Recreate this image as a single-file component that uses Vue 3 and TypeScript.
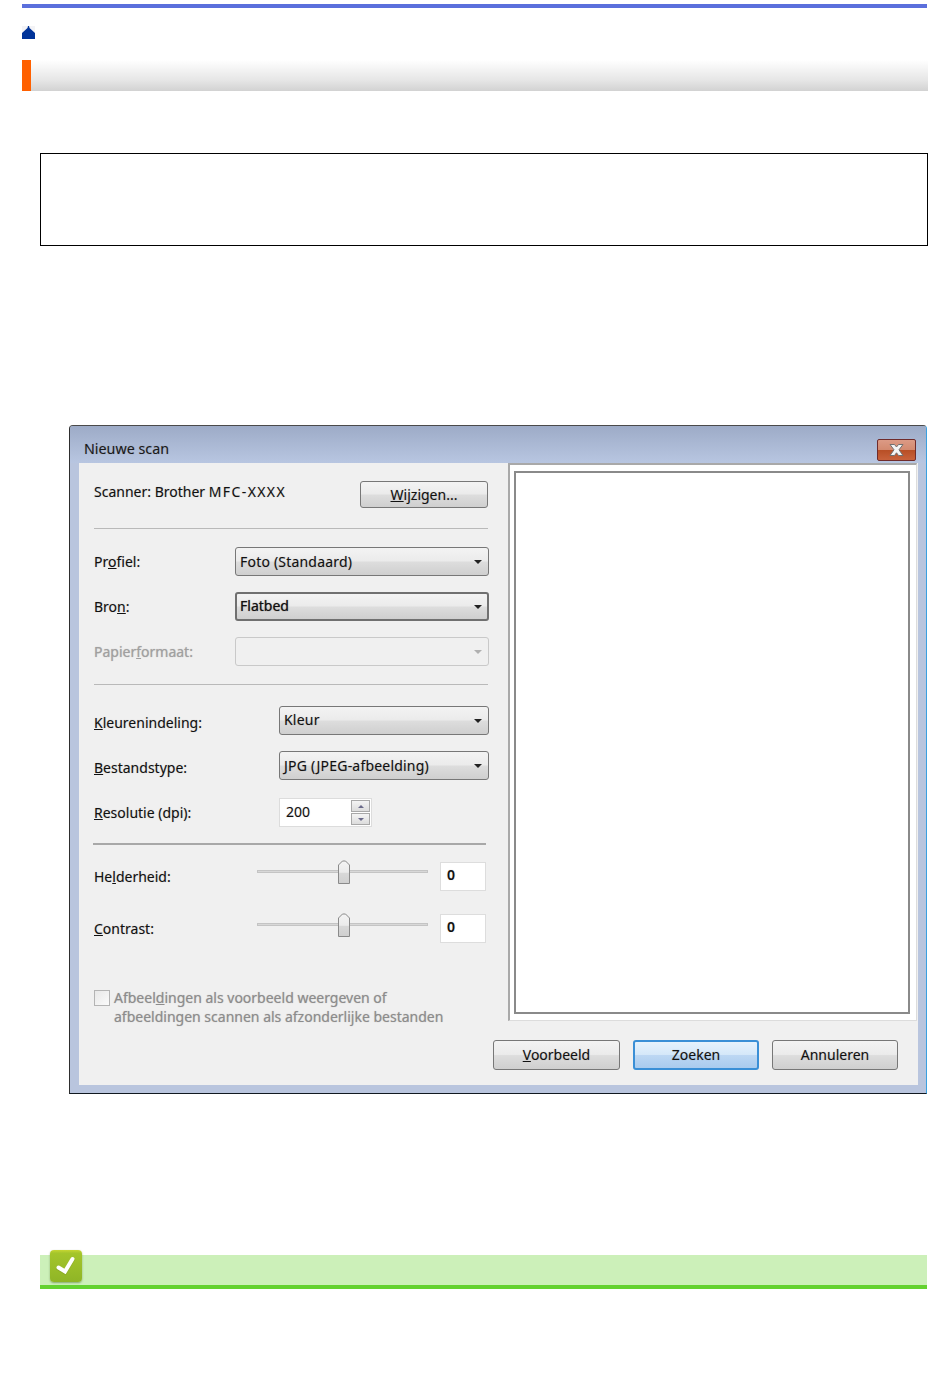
<script setup lang="ts">
interface Field {
  before: string
  key: string
  after: string
  value: string
  disabled?: boolean
  strong?: boolean
}

const profileFields: Field[] = [
  { before: 'Pr', key: 'o', after: 'fiel:', value: 'Foto (Standaard)' },
  { before: 'Bro', key: 'n', after: ':', value: 'Flatbed', strong: true },
  { before: 'Papier', key: 'f', after: 'ormaat:', value: '', disabled: true },
]

const formatFields: Field[] = [
  { before: '', key: 'K', after: 'leurenindeling:', value: 'Kleur' },
  { before: '', key: 'B', after: 'estandstype:', value: 'JPG (JPEG-afbeelding)' },
]

const sliders = [
  { before: 'He', key: 'l', after: 'derheid:', value: '0' },
  { before: '', key: 'C', after: 'ontrast:', value: '0' },
]
</script>

<template>
  <div class="page">
    <div class="topbar"></div>
    <svg class="home" width="13" height="13" viewBox="0 0 13 13" aria-hidden="true">
      <rect width="13" height="13" fill="#f3f3f6" />
      <path d="M0 13V7L5.500 2 6 0h1l.5 2L13 7v6z" fill="#003399" />
    </svg>
    <div class="heading"><span class="heading-mark"></span></div>
    <div class="outline-box"></div>

    <section class="dialog">
      <header class="titlebar">
        <span class="title">Nieuwe scan</span>
        <span class="close">
          <svg width="15" height="12" viewBox="0 0 15 12" aria-hidden="true">
            <path d="M1 .5h4.500l2 2.500 2-2.500H14L10 5.800l4 5.700H9.500l-2-2.700-2 2.700H1l4-5.700z" fill="#f4f4f4" stroke="#707070" stroke-width="1" />
          </svg>
        </span>
      </header>

      <div class="content">
        <div class="panes">
          <div class="form">
            <div class="scanner-row">
              <span>Scanner: Brother <span class="model">MFC-XXXX</span></span>
              <button class="btn change-btn" type="button"><u>W</u>ijzigen...</button>
            </div>
            <div class="rule rule-a"></div>

            <div class="group group-profile">
              <div v-for="f in profileFields" :key="f.key" class="row row-profile" :class="{ 'is-disabled': f.disabled }">
                <span class="label">{{ f.before }}<u>{{ f.key }}</u>{{ f.after }}</span>
                <div class="select" :class="{ 'select-strong': f.strong, 'select-disabled': f.disabled }">
                  <span>{{ f.value }}</span>
                  <i class="caret"></i>
                </div>
              </div>
            </div>
            <div class="rule rule-b"></div>

            <div class="group group-format">
              <div v-for="f in formatFields" :key="f.key" class="row row-format">
                <span class="label">{{ f.before }}<u>{{ f.key }}</u>{{ f.after }}</span>
                <div class="select">
                  <span>{{ f.value }}</span>
                  <i class="caret"></i>
                </div>
              </div>
              <div class="row row-format row-res">
                <span class="label"><u>R</u>esolutie (dpi):</span>
                <div class="spin">
                  <span class="spin-value">200</span>
                  <span class="spin-buttons">
                    <i class="spin-btn"><b class="tri tri-up"></b></i>
                    <i class="spin-btn"><b class="tri tri-down"></b></i>
                  </span>
                </div>
              </div>
            </div>
            <div class="rule rule-c"></div>

            <div class="group-sliders">
              <div v-for="s in sliders" :key="s.key" class="row row-slider">
                <span class="label">{{ s.before }}<u>{{ s.key }}</u>{{ s.after }}</span>
                <div class="track">
                  <svg class="thumb" width="14" height="25" viewBox="0 0 14 25" aria-hidden="true">
                    <defs>
                      <linearGradient id="thumbFill" x1="0" y1="0" x2="0" y2="1">
                        <stop offset="0" stop-color="#f4f4f4" />
                        <stop offset="0.5" stop-color="#ebebeb" />
                        <stop offset="0.55" stop-color="#d8d8d8" />
                        <stop offset="1" stop-color="#cfcfcf" />
                      </linearGradient>
                    </defs>
                    <path d="M1.500 23.500V5L5.500 1h3l4 4v18.500z" fill="url(#thumbFill)" stroke="#8a8a8a" stroke-width="1" stroke-linejoin="round" />
                  </svg>
                </div>
                <div class="num">{{ s.value }}</div>
              </div>
            </div>

            <div class="check-row">
              <span class="checkbox"></span>
              <span class="check-label">Afbeel<u>d</u>ingen als voorbeeld weergeven of<br />afbeeldingen scannen als afzonderlijke bestanden</span>
            </div>
          </div>

          <div class="preview">
            <div class="preview-frame"></div>
          </div>
        </div>

        <footer class="actions">
          <button class="btn action" type="button"><u>V</u>oorbeeld</button>
          <button class="btn action btn-primary" type="button">Zoeken</button>
          <button class="btn action" type="button">Annuleren</button>
        </footer>
      </div>
    </section>

    <div class="note">
      <span class="note-icon">
        <svg width="22" height="20" viewBox="0 0 22 20" aria-hidden="true">
          <path d="M3.500 11.500l6.500 4L17.500 3" fill="none" stroke="#7f9a24" stroke-width="4" stroke-linecap="square" stroke-linejoin="miter" opacity="0.5" transform="translate(0 1)" />
          <path d="M3.500 11.500l6.500 4L17.500 3" fill="none" stroke="#ffffff" stroke-width="4" stroke-linecap="round" stroke-linejoin="miter" />
        </svg>
      </span>
    </div>
  </div>
</template>

<style>
html,
body {
  margin: 0;
  background: #ffffff;
}
</style>

<style scoped>
.page {
  box-sizing: border-box;
  width: 950px;
  height: 1387px;
  padding: 4px 22px 0;
  overflow: hidden;
  font-family: "Noto Sans", "Liberation Sans", sans-serif;
  font-size: 14px;
  color: #111111;
  text-shadow: 0 0 1px rgba(60, 40, 40, 0.3);
}

.topbar {
  width: 905px;
  height: 4px;
  background: #5b6fdc;
}

.home {
  display: block;
  margin-top: 18px;
}

.heading {
  width: 906px;
  height: 31px;
  margin-top: 21px;
  background: linear-gradient(#ffffff 0%, #e6e6e6 65%, #d2d2d2 100%);
}

.heading-mark {
  display: block;
  width: 9px;
  height: 31px;
  background: #ff6000;
}

.outline-box {
  box-sizing: border-box;
  width: 888px;
  height: 93px;
  margin: 62px 0 0 18px;
  border: 1px solid #000000;
}

.dialog {
  box-sizing: border-box;
  display: flex;
  flex-direction: column;
  width: 858px;
  height: 669px;
  margin: 179px 0 0 47px;
  padding: 0 8px 8px 9px;
  background: #b9c5de;
  border-style: solid;
  border-width: 1px 1px 1px 1px;
  border-color: #4a4a4a #3aa0e0 #101820 #2e2e2e;
  border-radius: 4px 4px 0 0;
}

.titlebar {
  display: flex;
  flex: none;
  align-items: center;
  justify-content: space-between;
  height: 37px;
  margin: 0 -8px 0 -9px;
  padding: 0 10px 0 14px;
  background: linear-gradient(#9dabc7, #b8c6e1);
  border-radius: 3px 3px 0 0;
  font-size: 14.300px;
}

.title {
  padding-top: 8px;
  color: #1a1a1a;
}

.close {
  box-sizing: border-box;
  display: flex;
  align-items: center;
  justify-content: center;
  width: 39px;
  height: 22px;
  margin-top: 10px;
  background: linear-gradient(#dc9a85 0%, #d38a70 48%, #b84f26 52%, #c8623c 100%);
  border: 1px solid #6f2b2b;
  border-radius: 2px;
}

.content {
  display: flex;
  flex: 1;
  flex-direction: column;
  background: #f0f0f0;
}

.panes {
  display: grid;
  grid-template-columns: 429px 409px;
  grid-template-rows: 558px;
}

.form {
  box-sizing: border-box;
  min-height: 0;
  padding: 18px 20px 0 15px;
}

.scanner-row {
  display: flex;
  align-items: flex-start;
  justify-content: space-between;
  height: 27px;
  line-height: 22px;
}

.model {
  letter-spacing: 1.400px;
}

.rule {
  height: 1px;
  background: #b9b9b9;
}

.rule-a {
  margin-top: 20px;
}

.group {
  display: flex;
  flex-direction: column;
  gap: 16px;
}

.group-profile {
  margin-top: 18px;
}

.rule-b {
  margin-top: 18px;
}

.group-format {
  margin-top: 21px;
}

.row {
  display: grid;
  align-items: center;
  height: 29px;
}

.row-profile {
  grid-template-columns: 141px 254px;
}

.row-format {
  grid-template-columns: 185px 210px;
}

.row-format .label {
  margin-top: 4px;
}

.row-format:first-child .select span {
  margin-bottom: 2px;
}

.row-res {
  margin-top: 2px;
}

.row-res .label {
  margin-top: 0;
}

.is-disabled .label {
  color: #a0a0a0;
}

.select {
  box-sizing: border-box;
  display: flex;
  align-items: center;
  justify-content: space-between;
  height: 29px;
  padding: 0 4px 0 4px;
  letter-spacing: 0.200px;
  background: linear-gradient(#f3f3f3 0%, #ebebeb 48%, #dddddd 52%, #cfcfcf 100%);
  border: 1px solid #777777;
  border-radius: 3px;
}

.select-strong {
  border: 2px solid #707070;
  padding: 0 3px;
  letter-spacing: 0;
  text-shadow: 0 0 1px rgba(40, 20, 20, 0.7);
}

.select-strong span {
  margin-bottom: 2px;
}

.select-disabled {
  background: #f0f0f0;
  border-color: #c9c9c9;
}

.select-disabled .caret {
  border-top-color: #b0b0b0;
}

.caret {
  width: 0;
  height: 0;
  margin-right: 2px;
  border-left: 4px solid transparent;
  border-right: 4px solid transparent;
  border-top: 4px solid #222222;
}

.spin {
  box-sizing: border-box;
  display: flex;
  align-items: center;
  justify-content: space-between;
  width: 93px;
  height: 29px;
  padding: 0 0 0 6px;
  background: #ffffff;
  border: 1px solid #dcdcdc;
}

.spin-value {
  margin-bottom: 3px;
}

.spin-buttons {
  display: flex;
  flex-direction: column;
  gap: 1px;
  padding: 0 1px;
}

.spin-btn {
  display: flex;
  align-items: center;
  justify-content: center;
  box-sizing: border-box;
  width: 19px;
  height: 12px;
  background: linear-gradient(#f4f4f4, #dcdcdc);
  border: 1px solid #a8a8a8;
}

.tri {
  width: 0;
  height: 0;
  border-left: 3px solid transparent;
  border-right: 3px solid transparent;
}

.tri-up {
  border-bottom: 3px solid #6a6a8a;
}

.tri-down {
  border-top: 3px solid #6a6a8a;
}

.rule-c {
  width: 393px;
  height: 2px;
  margin: 16px 0 0 -1px;
  background: #a8a8a8;
}

.group-sliders {
  display: flex;
  flex-direction: column;
  gap: 23px;
  margin-top: 17px;
}

.row-slider {
  grid-template-columns: 163px 171px 46px;
}

.row-slider .num {
  margin-left: 12px;
}

.track {
  position: relative;
  align-self: start;
  box-sizing: border-box;
  height: 3px;
  margin-top: 8px;
  background: #d8d8d8;
  border: 1px solid #c4c4c4;
}

.row-slider + .row-slider .track {
  margin-top: 9px;
}

.thumb {
  position: absolute;
  top: -11px;
  left: 79px;
}

.num {
  box-sizing: border-box;
  width: 46px;
  height: 29px;
  padding-left: 6px;
  line-height: 24px;
  font-weight: 600;
  background: #ffffff;
  border: 1px solid #dddddd;
}

.check-row {
  display: flex;
  gap: 4px;
  margin-top: 47px;
}

.checkbox {
  flex: none;
  box-sizing: border-box;
  width: 16px;
  height: 16px;
  background: linear-gradient(135deg, #e8e8e8, #fbfbfb);
  border: 1px solid #b4b4b4;
}

.check-label {
  margin-top: -2px;
  line-height: 19px;
  color: #8c8c8c;
  white-space: nowrap;
}

.preview {
  box-sizing: border-box;
  padding: 6px 6px 6px 4px;
  background: #ffffff;
  border-top: 2px solid #a9a9a9;
  border-left: 2px solid #a9a9a9;
  border-right: 1px solid #dcdcdc;
  border-bottom: 1px solid #dcdcdc;
}

.preview-frame {
  box-sizing: border-box;
  height: 100%;
  border: 2px solid #8a8a8a;
}

.actions {
  display: flex;
  justify-content: flex-end;
  gap: 13px;
  margin-top: 19px;
  padding-right: 20px;
}

.btn {
  box-sizing: border-box;
  padding: 0;
  font: inherit;
  color: #111111;
  text-shadow: inherit;
  background: linear-gradient(#f3f3f3 0%, #ebebeb 48%, #dddddd 52%, #cfcfcf 100%);
  border: 1px solid #777777;
  border-radius: 3px;
}

.change-btn {
  width: 128px;
  height: 27px;
}

.action {
  width: 126px;
  height: 30px;
  padding-bottom: 2px;
}

.action:first-child {
  width: 127px;
}

.btn-primary {
  background: linear-gradient(#e6f2fc 0%, #d5e8f9 48%, #bcd7f3 52%, #a9cbee 100%);
  border: 2px solid #3a8fd6;
}

.note {
  position: relative;
  box-sizing: border-box;
  width: 887px;
  height: 34px;
  margin: 161px 0 0 18px;
  background: #ccf0b9;
  border-bottom: 4px solid #63d22f;
}

.note-icon {
  position: absolute;
  top: -5px;
  left: 10px;
  display: flex;
  align-items: center;
  justify-content: center;
  width: 32px;
  height: 32px;
  background: linear-gradient(#c6d632 0%, #a4c52b 10%, #8fb526 100%);
  border-radius: 4px;
  box-shadow: 0 1px 2px rgba(90, 120, 60, 0.6);
}
</style>
